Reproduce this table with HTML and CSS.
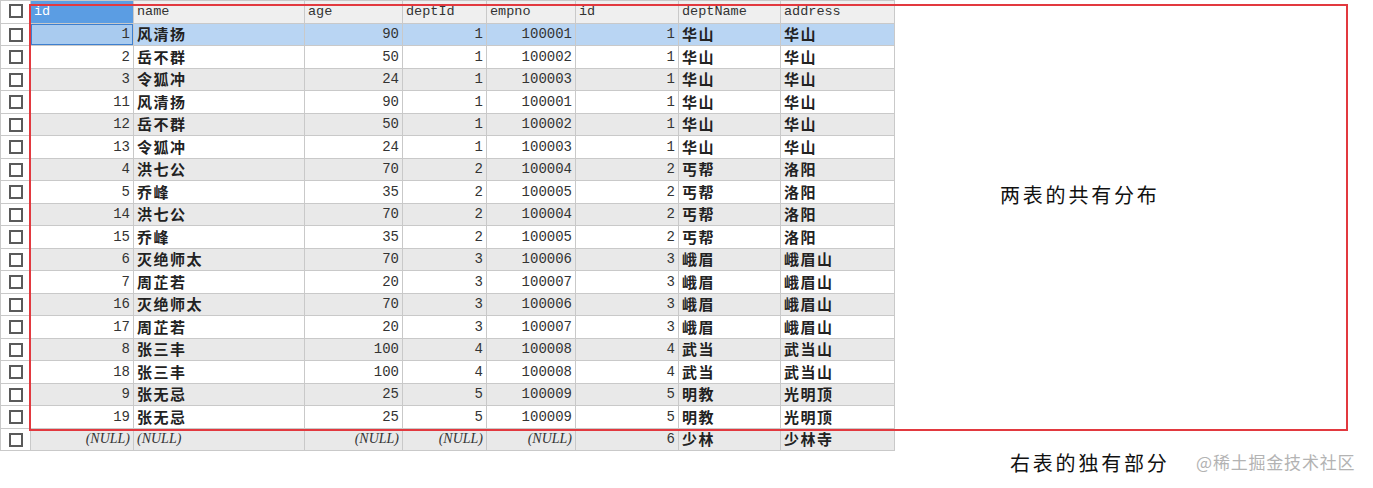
FILE: index.html
```html
<!DOCTYPE html>
<html lang="zh-CN">
<head>
<meta charset="utf-8">
<link rel="stylesheet" href="styles.css">
</head>
<body>
<div class="canvas">
  <table class="grid">
    <colgroup>
      <col class="c-chk"><col class="c-id"><col class="c-name"><col class="c-age"><col class="c-dept"><col class="c-empno"><col class="c-id2"><col class="c-dname"><col class="c-addr">
    </colgroup>
    <thead>
      <tr>
        <th class="chk"><span class="box"></span></th>
        <th class="sel">id</th><th>name</th><th>age</th><th>deptId</th><th>empno</th><th>id</th><th>deptName</th><th>address</th>
      </tr>
    </thead>
    <tbody id="rows"></tbody>
  </table>
  <div class="annot-box"></div>
  <div class="label label-common">两表的共有分布</div>
  <div class="label label-right">右表的独有部分</div>
  <div class="watermark">@稀土掘金技术社区</div>
</div>
<script src="app.js"></script>
</body>
</html>
```
FILE: styles.css
```css
html, body { margin: 0; padding: 0; background: #fff; }
.canvas { position: relative; width: 1373px; height: 488px; overflow: hidden; }
.grid {
  border-collapse: collapse;
  table-layout: fixed;
  width: 894px;
  font-family: "Liberation Mono", "DejaVu Sans Mono", monospace;
  font-size: 14px;
  color: #333;
}
.c-chk { width: 30px; } .c-id { width: 103px; } .c-name { width: 171px; } .c-age { width: 98px; }
.c-dept { width: 84px; } .c-empno { width: 89px; } .c-id2 { width: 103px; } .c-dname { width: 102px; } .c-addr { width: 114px; }
.grid th, .grid td {
  border: 1px solid #c9c9c9;
  height: 21.5px;
  padding: 0 3px;
  white-space: nowrap;
  overflow: hidden;
  line-height: 20px;
}
.grid th { background: #efefef; text-align: left; font-weight: normal; color: #333; font-size: 13.5px; }
.grid th.sel { background: #5b9de3; color: #fff; }
.grid td.chk, .grid th.chk { background: #fff; text-align: center; padding: 0; }
.box { display: inline-block; width: 10px; height: 10px; border: 2px solid #5a5a5a; background: #fff; vertical-align: middle; }
.grid tr.alt td { background: #e9e9e9; }
.grid tr.cur td { background: #b9d5f3; }
.grid tr.cur td.focus { background: #a9cbef; box-shadow: inset 0 0 0 1px #3d7fcf; }
.grid tr td.chk { background: #fff; }
.num { text-align: right; }
.cn { font-family: "Noto Sans CJK SC", "Noto Sans CJK TC", sans-serif; font-size: 15px; font-weight: 700; color: #222; letter-spacing: 1.5px; padding-left: 2px; }
.null { text-align: right; font-style: italic; color: #333; font-family: "Liberation Serif", serif; font-size: 14px; }
.null.left { text-align: left; }
.annot-box {
  position: absolute;
  left: 29px; top: 4px;
  width: 1315px; height: 423px;
  border: 2.5px solid #e2393f;
}
.label {
  position: absolute;
  font-family: "Noto Sans CJK SC", sans-serif;
  font-size: 20px;
  letter-spacing: 2.8px;
  color: #111;
  line-height: 26px;
}
.label-common { left: 1000px; top: 182px; }
.label-right { left: 1010px; top: 450px; }
.watermark {
  position: absolute;
  left: 1196px; top: 450px;
  font-family: "Noto Sans CJK SC", sans-serif;
  font-size: 17px;
  letter-spacing: 0.8px;
  color: #b3b3b3;
  line-height: 24px;
}
```
FILE: app.js
```js
var data = [
  [1,"风清扬",90,1,100001,1,"华山","华山"],
  [2,"岳不群",50,1,100002,1,"华山","华山"],
  [3,"令狐冲",24,1,100003,1,"华山","华山"],
  [11,"风清扬",90,1,100001,1,"华山","华山"],
  [12,"岳不群",50,1,100002,1,"华山","华山"],
  [13,"令狐冲",24,1,100003,1,"华山","华山"],
  [4,"洪七公",70,2,100004,2,"丐帮","洛阳"],
  [5,"乔峰",35,2,100005,2,"丐帮","洛阳"],
  [14,"洪七公",70,2,100004,2,"丐帮","洛阳"],
  [15,"乔峰",35,2,100005,2,"丐帮","洛阳"],
  [6,"灭绝师太",70,3,100006,3,"峨眉","峨眉山"],
  [7,"周芷若",20,3,100007,3,"峨眉","峨眉山"],
  [16,"灭绝师太",70,3,100006,3,"峨眉","峨眉山"],
  [17,"周芷若",20,3,100007,3,"峨眉","峨眉山"],
  [8,"张三丰",100,4,100008,4,"武当","武当山"],
  [18,"张三丰",100,4,100008,4,"武当","武当山"],
  [9,"张无忌",25,5,100009,5,"明教","光明顶"],
  [19,"张无忌",25,5,100009,5,"明教","光明顶"],
  [null,null,null,null,null,6,"少林","少林寺"]
];
var tb = document.getElementById("rows");
data.forEach(function (r, i) {
  var tr = document.createElement("tr");
  if (i === 0) tr.className = "cur";
  else if (i % 2 === 0) tr.className = "alt";
  var html = '<td class="chk"><span class="box"></span></td>';
  var kinds = ["num","cn","num","num","num","num","cn","cn"];
  r.forEach(function (v, j) {
    var cls = kinds[j];
    if (i === 0 && j === 0) cls += " focus";
    if (v === null) {
      html += '<td class="null' + (j === 1 ? ' left' : '') + '">(NULL)</td>';
    } else {
      html += '<td class="' + cls + '">' + v + '</td>';
    }
  });
  tr.innerHTML = html;
  tb.appendChild(tr);
});
```
